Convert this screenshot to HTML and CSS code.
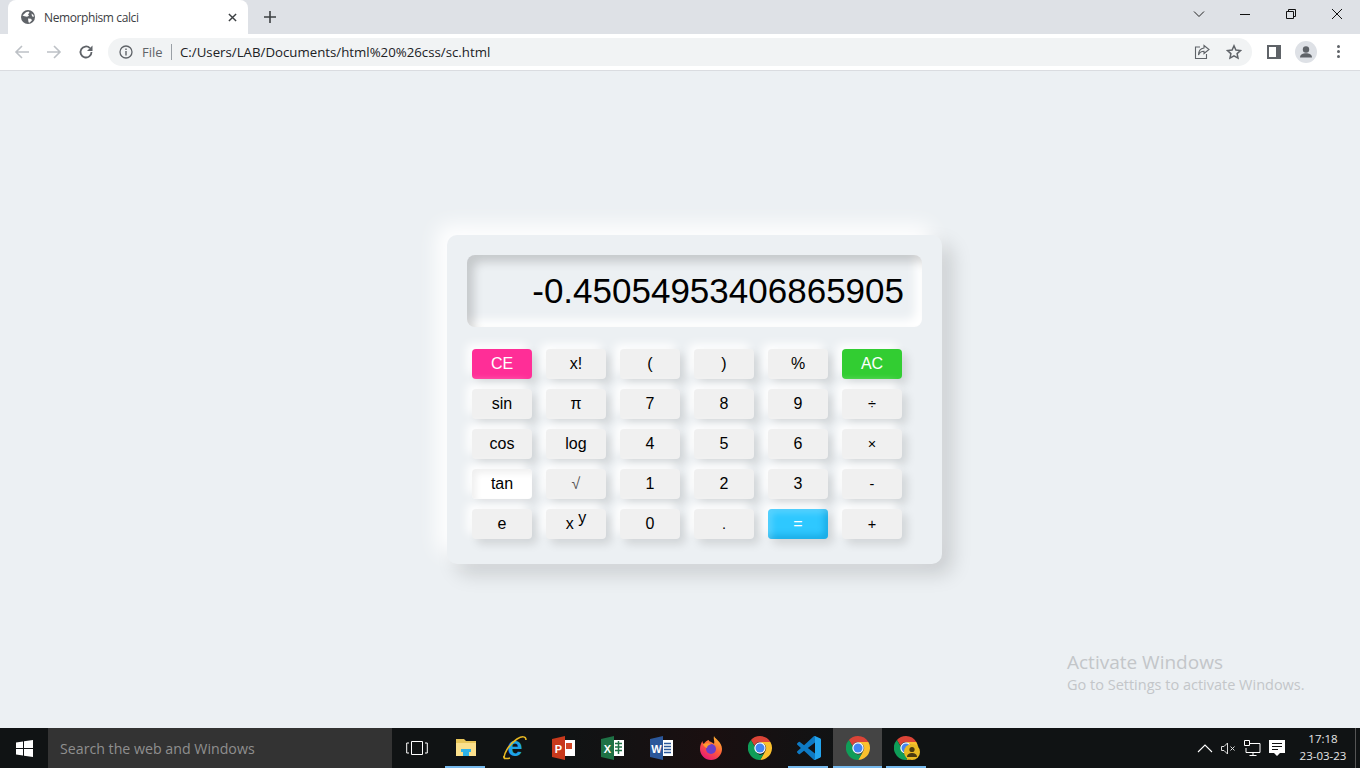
FILE: index.html
```html
<!DOCTYPE html>
<html lang="en">
<head>
  <meta charset="UTF-8">
  <title>Nemorphism calci</title>
  <meta name="viewport" content="width=device-width, initial-scale=1.0">
  <link rel="stylesheet" href="styles.css">
</head>
<body>

  <svg class="defs" width="0" height="0" aria-hidden="true">
    <symbol id="chrome" viewBox="0 0 24 24">
      <path fill="#db4437" d="M12 0a12 12 0 0 1 10.4 6H12a6 6 0 0 0-5.6 3.8L2.9 4.1A12 12 0 0 1 12 0z"/>
      <path fill="#fbc02d" d="M22.4 6A12 12 0 0 1 12.2 24l5-8.8A6 6 0 0 0 16.8 8.4L12 6z"/>
      <path fill="#0f9d58" d="M2.9 4.1l5.2 8.9a4.500 4.500 0 0 0 9.100 2.200l-5 8.800A12 12 0 0 1 2.900 4.100z"/>
      <circle cx="12" cy="12" r="5.700" fill="#fff"/>
      <circle cx="12" cy="12" r="4.500" fill="#4285f4"/>
    </symbol>
  </svg>

  <!-- barra de pestañas -->
  <div class="tabstrip">
    <div class="tab">
      <svg class="favicon" viewBox="0 0 16 16">
        <circle cx="8" cy="8" r="7" fill="#5f6368"/>
        <path fill="#fff" d="M2.500 6.500 6 3.200l2.500-.8 1 1.300-1.500 1.500 1 1.500-2 1-2.500-.5zM8 9.500l3 .3 1 1.500-2.500 2.500-1-.5zM11.500 4.500l2 1.500.3 2-1.800-.8z"/>
      </svg>
      <span class="tab-title">Nemorphism calci</span>
      <svg class="tab-close" viewBox="0 0 10 10"><path d="M1 1l8 8M9 1l-8 8" stroke="#3c4043" stroke-width="1.600"/></svg>
    </div>
    <svg class="new-tab" viewBox="0 0 12 12"><path d="M6 0v12M0 6h12" stroke="#3c4043" stroke-width="1.600"/></svg>
    <div class="window-btns">
      <span class="win-btn"><svg width="12" height="12" viewBox="0 0 12 12"><path d="M1 3.500l5 5 5-5" fill="none" stroke="#222" stroke-width="1"/></svg></span>
      <span class="win-btn"><svg width="12" height="12" viewBox="0 0 12 12"><path d="M1 6.500h10" stroke="#111" stroke-width="1"/></svg></span>
      <span class="win-btn"><svg width="12" height="12" viewBox="0 0 12 12"><path d="M1.500 3.500h7v7h-7zM3.500 3.500v-2h7v7h-2" fill="none" stroke="#111" stroke-width="1"/></svg></span>
      <span class="win-btn"><svg width="12" height="12" viewBox="0 0 12 12"><path d="M1 1l10 10M11 1L1 11" stroke="#111" stroke-width="1"/></svg></span>
    </div>
  </div>

  <!-- barra de direcciones -->
  <div class="toolbar">
    <svg class="nav-icon" viewBox="0 0 16 16"><path d="M15 8H2M8 2 2 8l6 6" fill="none" stroke="#bdc1c6" stroke-width="1.600"/></svg>
    <svg class="nav-icon" viewBox="0 0 16 16"><path d="M1 8h13M8 2l6 6-6 6" fill="none" stroke="#bdc1c6" stroke-width="1.600"/></svg>
    <svg class="nav-icon" viewBox="0 0 16 16"><path d="M13.500 8a5.500 5.500 0 1 1-1.600-3.900" fill="none" stroke="#5f6368" stroke-width="1.800"/><path d="M14.500 1.500v5.500H9z" fill="#5f6368"/></svg>
    <div class="omnibox">
      <svg class="info" viewBox="0 0 14 14"><circle cx="7" cy="7" r="6" fill="none" stroke="#5f6368" stroke-width="1.300"/><path d="M7 6v4.500M7 3.500v1.400" stroke="#5f6368" stroke-width="1.400"/></svg>
      <span class="scheme">File</span>
      <span class="divider"></span>
      <span class="url">C:/Users/LAB/Documents/html%20%26css/sc.html</span>
      <svg class="omni-icon share" viewBox="0 0 16 16"><path d="M6 3H1.500v11.500h11V10" fill="none" stroke="#5f6368" stroke-width="1.100"/><path d="M10 1.500 15 5.500l-5 4V7.300C7.500 7.300 5.500 8.500 4.500 11c0-4 2-6.500 5.500-7z" fill="none" stroke="#5f6368" stroke-width="1.100"/></svg>
      <svg class="omni-icon star" viewBox="0 0 16 16"><path d="M8 1.800l1.900 4.200 4.600.5-3.400 3.100.9 4.500L8 11.800l-4 2.300.9-4.500L1.500 6.500 6.100 6z" fill="none" stroke="#5f6368" stroke-width="1.500"/></svg>
    </div>
    <div class="browser-actions">
      <span class="panel"><span class="panel-pane"></span></span>
      <span class="avatar">
        <svg viewBox="0 0 22 22"><circle cx="11" cy="8.500" r="3.200" fill="#5f6368"/><path d="M5 16.500c0-3 3-4.300 6-4.300s6 1.300 6 4.300z" fill="#5f6368"/></svg>
      </span>
      <span class="dots"><i></i><i></i><i></i></span>
    </div>
  </div>

  <main class="page">
    <div class="calc">
      <div class="display">-0.45054953406865905</div>
      <div class="keys">
        <button class="key key-ce">CE</button>
        <button class="key">x!</button>
        <button class="key">(</button>
        <button class="key">)</button>
        <button class="key">%</button>
        <button class="key key-ac">AC</button>

        <button class="key">sin</button>
        <button class="key">π</button>
        <button class="key">7</button>
        <button class="key">8</button>
        <button class="key">9</button>
        <button class="key key-small">÷</button>

        <button class="key">cos</button>
        <button class="key">log</button>
        <button class="key">4</button>
        <button class="key">5</button>
        <button class="key">6</button>
        <button class="key key-small">×</button>

        <button class="key key-hover">tan</button>
        <button class="key key-root">√</button>
        <button class="key">1</button>
        <button class="key">2</button>
        <button class="key">3</button>
        <button class="key key-small">-</button>

        <button class="key">e</button>
        <button class="key">x <sup>y</sup></button>
        <button class="key">0</button>
        <button class="key key-small">.</button>
        <button class="key key-eq">=</button>
        <button class="key key-small">+</button>
      </div>
    </div>

    <div class="activate">
      <div class="activate-title">Activate Windows</div>
      <div class="activate-sub">Go to Settings to activate Windows.</div>
    </div>
  </main>

  <!-- barra de tareas -->
  <footer class="taskbar">
    <div class="start">
      <svg width="17" height="17" viewBox="0 0 17 17"><path fill="#fff" d="M0 2.400 7 1.400v6.500H0zM8 1.300 17 0v7.900H8zM0 8.900h7v6.600L0 14.500zM8 8.900h9V17L8 15.700z"/></svg>
    </div>
    <div class="search">Search the web and Windows</div>

    <div class="task">
      <svg width="22" height="14" viewBox="0 0 22 14"><path d="M5.500 .5h11v13h-11zM3 2H.7v10H3M19 2h2.300v10H19" fill="none" stroke="#fff" stroke-width="1"/></svg>
    </div>
    <div class="task open">
      <svg width="22" height="20" viewBox="0 0 22 20">
        <path fill="#e8c65a" d="M1 1h8l2 2h10v15H1z"/>
        <path fill="#fbe08c" d="M1 5h20v13H1z"/>
        <path fill="#2fb3e8" d="M6 11h10v3h-2v4H8v-4H6z"/>
      </svg>
    </div>
    <div class="task">
      <svg width="36" height="36" viewBox="-6 -6 36 36">
        <text class="ie-e" x="12" y="19.500" text-anchor="middle">e</text>
        <path d="M2 23C-1 20 6 8 14 3c5-3 9-3 9 1" fill="none" stroke="#e8b923" stroke-width="1.500"/>
        <path d="M1 20c-1 3 3 3 6 2" fill="none" stroke="#e8b923" stroke-width="1.500"/>
      </svg>
    </div>
    <div class="task">
      <svg width="24" height="24" viewBox="0 0 24 24">
        <path fill="#fff" d="M11 4h12v16H11z"/>
        <path fill="#d24726" d="M14 7h6v6h-6z"/>
        <path fill="#c8391c" d="M0 3l13-3v24L0 21z"/>
        <text class="app-letter" x="6.500" y="16.500" text-anchor="middle">P</text>
      </svg>
    </div>
    <div class="task">
      <svg width="24" height="24" viewBox="0 0 24 24">
        <path fill="#fff" d="M11 4h12v16H11z"/>
        <path d="M14 7.500h7M14 11h7M14 14.500h7M17.500 5v13" stroke="#1e7145" stroke-width="1.500"/>
        <path fill="#1e7145" d="M0 3l13-3v24L0 21z"/>
        <text class="app-letter" x="6.500" y="16.500" text-anchor="middle">X</text>
      </svg>
    </div>
    <div class="task">
      <svg width="24" height="24" viewBox="0 0 24 24">
        <path fill="#fff" d="M11 4h12v16H11z"/>
        <path d="M14 7.500h7M14 10.500h7M14 13.500h7M14 16.500h7" stroke="#2b579a" stroke-width="1.500"/>
        <path fill="#2b579a" d="M0 3l13-3v24L0 21z"/>
        <text class="app-letter" x="6.500" y="16.500" text-anchor="middle">W</text>
      </svg>
    </div>
    <div class="task">
      <svg width="24" height="24" viewBox="0 0 24 24">
        <defs>
          <linearGradient id="fx" x1="0.800" y1="0" x2="0.200" y2="1">
            <stop offset="0" stop-color="#ffbd2e"/>
            <stop offset=".5" stop-color="#ff5a3c"/>
            <stop offset="1" stop-color="#e3127c"/>
          </linearGradient>
        </defs>
        <path fill="url(#fx)" d="M15 0c1 3 8 6 8 13a11 11 0 0 1-22 0c0-3 1-6 2.500-8 0 1.500.5 2.500 1.500 3 1-2 2.500-3.500 5-4-1 1.500 3.500 2 5 4C16 5 14 3 15 0z"/>
        <circle cx="12" cy="13" r="5" fill="#6b3fc9"/>
        <path fill="#ff9a2e" d="M4 8c3-1 6-1 8 .5-2 0-4 1.500-4 3.500-2-.5-3.500-2-4-4z"/>
      </svg>
    </div>
    <div class="task"><svg width="24" height="24"><use href="#chrome"/></svg></div>
    <div class="task open">
      <svg width="24" height="24" viewBox="0 0 24 24">
        <path fill="#0e7ac4" d="M23.150 2.587 18.210.21a1.494 1.494 0 0 0-1.705.29l-9.460 8.630-4.120-3.128a.999.999 0 0 0-1.276.057L.327 7.261A1 1 0 0 0 .326 8.740L3.899 12 .326 15.260a1 1 0 0 0 .001 1.479L1.650 17.940a.999.999 0 0 0 1.276.057l4.120-3.128 9.460 8.630a1.492 1.492 0 0 0 1.704.29l4.942-2.377A1.500 1.500 0 0 0 24 20.060V3.939a1.500 1.500 0 0 0-.850-1.352zm-5.146 14.861L10.826 12l7.178-5.448v10.896z"/>
        <path fill="#23a5ee" d="M16.505.5a1.494 1.494 0 0 1 1.705-.29l4.940 2.377A1.500 1.500 0 0 1 24 3.939V20.060a1.500 1.500 0 0 1-.850 1.352l-4.940 2.377a1.492 1.492 0 0 1-1.705-.29c.6.500 1.500.100 1.500-.700V1.200c0-.800-.900-1.200-1.500-.700z"/>
      </svg>
    </div>
    <div class="task active"><svg width="24" height="24"><use href="#chrome"/></svg></div>
    <div class="task open">
      <svg width="26" height="24" viewBox="0 0 26 24">
        <use href="#chrome" width="24" height="24"/>
        <circle cx="18" cy="16" r="8" fill="#e8b923"/>
        <circle cx="18" cy="13.500" r="2.600" fill="#4a3a10"/>
        <path d="M13 21c0-3 2.500-4 5-4s5 1 5 4z" fill="#4a3a10"/>
      </svg>
    </div>

    <div class="tray">
      <svg width="16" height="9" viewBox="0 0 16 9"><path d="M1 8l7-7 7 7" fill="none" stroke="#fff" stroke-width="1.100"/></svg>
      <svg width="15" height="13" viewBox="0 0 15 13"><path d="M.5 4.500h2.500L6.500 1v11L3 8.500H.5z" fill="none" stroke="#ddd" stroke-width="1"/><path d="M9.500 4.500l4 4M13.500 4.500l-4 4" stroke="#ddd" stroke-width="1"/></svg>
      <svg width="17" height="16" viewBox="0 0 17 16"><path d="M3.500 3.500H16v9H2V8M9 12.500v2.500M5.500 15.500h7" fill="none" stroke="#fff" stroke-width="1"/><path d="M.5 .5h5v5h-5z" fill="#111" stroke="#fff" stroke-width="1"/></svg>
      <svg width="16" height="16" viewBox="0 0 16 16"><path fill="#fff" d="M0 0h16v13h-5l-3 3-3-3H0z"/><path d="M3 3.500h10M3 6.500h10M3 9.500h6" stroke="#111" stroke-width="1"/></svg>
      <div class="clock"><span>17:18</span><span>23-03-23</span></div>
      <span class="show-desktop"></span>
    </div>
  </footer>

</body>
</html>
```

FILE: styles.css
```css
:root {
  --bg: #ecf0f3;
  --key: #f0f0f0;
  --text: #000;
  --chrome: #dee1e6;
  --task: #101314;
}

* {
  box-sizing: border-box;
}

html, body {
  height: 100%;
}

body {
  margin: 0;
  display: flex;
  flex-direction: column;
  overflow: hidden;
  background: var(--bg);
  color: var(--text);
  font-family: "Liberation Sans", Arial, sans-serif;
}

.defs {
  position: absolute;
}

/* Pestañas */
.tabstrip {
  height: 34px;
  flex: none;
  display: flex;
  align-items: center;
  padding-left: 8px;
  background: var(--chrome);
}

.tab {
  width: 240px;
  height: 34px;
  display: flex;
  align-items: center;
  padding: 0 11px 0 12px;
  background: #fff;
  border-radius: 8px 8px 0 0;
  font-family: "Open Sans", sans-serif;
}

.favicon {
  width: 16px;
  height: 16px;
  flex: none;
}

.tab-title {
  flex: 1;
  margin-left: 8px;
  font-size: 12px;
  color: #3c4043;
  letter-spacing: -0.4px;
}

.tab-close {
  width: 9px;
  height: 9px;
}

.new-tab {
  width: 12px;
  height: 12px;
  margin-left: 16px;
}

.window-btns {
  display: flex;
  margin-left: auto;
}

.win-btn {
  width: 46px;
  height: 34px;
  display: flex;
  align-items: center;
  justify-content: center;
  padding-bottom: 6px;
}

/* Barra de direcciones */
.toolbar {
  height: 37px;
  flex: none;
  display: flex;
  align-items: center;
  padding: 0 0 1px 14px;
  background: #fff;
  border-bottom: 1px solid #dadce0;
}

.nav-icon {
  width: 16px;
  height: 16px;
  margin-right: 16px;
}

.omnibox {
  width: 1144px;
  height: 28px;
  display: flex;
  align-items: center;
  margin-left: -2px;
  padding: 0 10px 0 11px;
  background: #f1f3f4;
  border-radius: 14px;
  font-family: "Open Sans", sans-serif;
  font-size: 13.250px;
}

.info {
  width: 14px;
  height: 14px;
}

.scheme {
  width: 21px;
  margin-left: 9px;
  color: #5f6368;
  font-size: 13px;
  white-space: nowrap;
}

.divider {
  width: 1px;
  height: 16px;
  margin: 0 8px;
  background: #9aa0a6;
}

.url {
  flex: 1;
  color: #202124;
}

.omni-icon {
  width: 16px;
  height: 16px;
  margin-left: 16px;
}

.browser-actions {
  display: flex;
  align-items: center;
  margin-left: 15px;
}

.panel {
  width: 14px;
  height: 14px;
  display: flex;
  justify-content: flex-start;
  padding: 2px 5px 2px 2px;
  background: #5f6368;
}

.panel-pane {
  flex: 1;
  background: #fff;
}

.avatar {
  width: 22px;
  height: 22px;
  margin-left: 14px;
  border-radius: 50%;
  background: #dee1e6;
}

.avatar svg {
  display: block;
}

.dots {
  display: flex;
  flex-direction: column;
  gap: 2px;
  margin-left: 20px;
}

.dots i {
  width: 3px;
  height: 3px;
  border-radius: 50%;
  background: #5f6368;
}

/* Calculadora */
.page {
  flex: 1;
  position: relative;
  display: flex;
  align-items: center;
  justify-content: center;
  padding-left: 29px;
}

.calc {
  width: 495px;
  padding: 20px 20px 25px;
  background: var(--bg);
  border-radius: 10px;
  box-shadow: -10px -10px 20px #fff, 10px 10px 20px rgba(0, 0, 0, 0.15);
}

.display {
  height: 72px;
  padding-right: 18px;
  text-align: right;
  font-size: 35px;
  line-height: 72px;
  background: var(--bg);
  border-radius: 8px;
  box-shadow: inset 7px 7px 10px rgba(0, 0, 0, 0.16), inset -7px -7px 10px #fff;
}

.keys {
  display: grid;
  grid-template-columns: repeat(6, 60px);
  grid-auto-rows: 30px;
  gap: 10px 14px;
  margin: 22px 0 0 5px;
}

.key {
  padding: 0;
  border: none;
  border-radius: 4px;
  background: var(--key);
  color: var(--text);
  font-family: inherit;
  font-size: 16px;
  box-shadow: 5px 5px 10px rgba(0, 0, 0, 0.12), -5px -5px 10px #fff;
  cursor: pointer;
}

.key sup {
  font-size: 16px;
  line-height: 0;
  vertical-align: 6px;
}

.key-small {
  font-size: 14.500px;
}

.key-root {
  color: #555;
}

.key-ce {
  background: #ff2e97;
  color: #fff;
}

.key-ac {
  background: #32cd32;
  color: #fff;
}

.key-eq {
  background: #2ec8ff;
  color: #fff;
  box-shadow: 5px 5px 10px rgba(0, 0, 0, 0.12), -5px -5px 10px #fff,
    inset 4px 4px 6px rgba(255, 255, 255, 0.2), inset -4px -4px 6px rgba(0, 140, 200, 0.45);
}

.key-hover {
  background: #fff;
  box-shadow: 5px 5px 10px rgba(0, 0, 0, 0.08), -5px -5px 10px #fff, inset 4px 4px 6px #f0f0f0;
}

/* Marca de agua */
.activate {
  position: absolute;
  left: 1067px;
  bottom: 33px;
  font-family: "Open Sans", sans-serif;
  color: #c3c6c9;
  white-space: nowrap;
}

.activate-title {
  font-size: 19px;
  line-height: 26px;
}

.activate-sub {
  font-size: 14.500px;
  line-height: 20px;
}

/* Barra de tareas */
.taskbar {
  height: 40px;
  flex: none;
  display: flex;
  align-items: stretch;
  background: linear-gradient(90deg, var(--task) 42%, #1a0f10 52%, var(--task) 62%);
  font-family: "Open Sans", sans-serif;
}

.start {
  width: 48px;
  display: flex;
  align-items: center;
  justify-content: center;
}

.search {
  width: 344px;
  display: flex;
  align-items: center;
  padding-left: 12px;
  background: #333;
  color: #8f8f8f;
  font-size: 14.200px;
}

.task {
  width: 49px;
  position: relative;
  display: flex;
  align-items: center;
  justify-content: center;
}

.task.open::after,
.task.active::after {
  content: "";
  position: absolute;
  left: 4px;
  right: 5px;
  bottom: 0;
  height: 2px;
  background: #76b9ed;
}

.task.active {
  background: #444;
}

.task.active::after {
  left: 0;
  right: 0;
}

.ie-e {
  font-family: "Liberation Sans", sans-serif;
  font-size: 27px;
  font-weight: bold;
  fill: #1ea3e6;
}

.app-letter {
  font-family: "Liberation Sans", sans-serif;
  font-size: 11px;
  font-weight: bold;
  fill: #fff;
}

.tray {
  flex: 1;
  display: flex;
  align-items: center;
  justify-content: flex-end;
  gap: 8px;
  color: #e6e6e6;
}

.clock {
  display: flex;
  flex-direction: column;
  align-items: center;
  width: 62px;
  margin-left: -1px;
  padding-bottom: 3px;
  font-size: 11.500px;
  line-height: 17px;
}

.show-desktop {
  align-self: stretch;
  width: 1px;
  margin: 0 4px 0 -7px;
  background: #555;
}
```
